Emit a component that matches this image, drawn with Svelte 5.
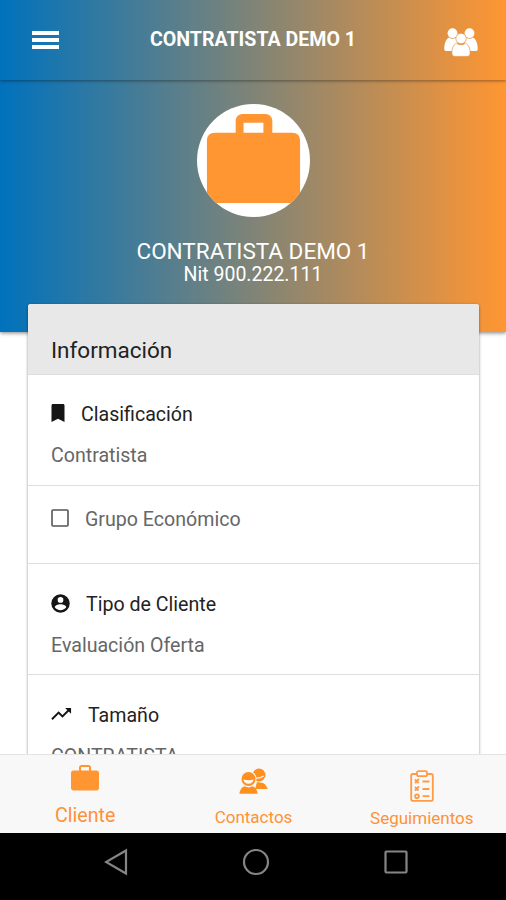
<script>
  const client = {
    name: 'CONTRATISTA DEMO 1',
    nit: '900.222.111'
  };

  const rows = [
    { icon: 'bookmark', title: 'Clasificación', value: 'Contratista' },
    { icon: 'checkbox', title: 'Grupo Económico', muted: true },
    { icon: 'person', title: 'Tipo de Cliente', value: 'Evaluación Oferta' },
    { icon: 'trending', title: 'Tamaño', value: 'CONTRATISTA' }
  ];

  const tabs = [
    { id: 'cliente', label: 'Cliente' },
    { id: 'contactos', label: 'Contactos' },
    { id: 'seguimientos', label: 'Seguimientos' }
  ];

  let selectedTab = $state('cliente');
</script>

<div class="screen">
  <header class="toolbar">
    <button class="menu" aria-label="Menú">
      <span></span>
      <span></span>
      <span></span>
    </button>
    <h1>{client.name}</h1>
    <button class="people" aria-label="Contactos">
      <svg width="34" height="29" viewBox="0 0 34 29" fill="#fff">
        <circle cx="8.5" cy="5.2" r="4.9" />
        <circle cx="25.5" cy="5.2" r="4.9" />
        <path d="M5 9.500c2 1.600 5 1.600 7 0l3 13.500H2c-1.200 0-1.700-.6-1.700-1.700C.3 16 1.500 11.500 5 9.500z" />
        <path d="M29 9.500c-2 1.600-5 1.600-7 0l-3 13.500h13c1.200 0 1.700-.6 1.700-1.700C33.700 16 32.500 11.500 29 9.500z" />
        <g stroke="#e5923f" stroke-width=".7">
          <circle cx="17" cy="10.500" r="5.200" />
          <path d="M12.500 15.200c2.800 2 6.200 2 9 0 3.300 1.200 4.800 6 4.600 10.300-.1 2-1.400 2.900-3.100 2.900H11c-1.700 0-3-.9-3.100-2.900-.2-4.300 1.300-9.100 4.600-10.300z" />
        </g>
      </svg>
    </button>
  </header>

  <section class="hero">
    <div class="avatar">
      <svg width="113" height="113" viewBox="0 0 114 114">
        <path fill="#ff9632" fill-rule="evenodd" d="M39 29v-12c0-4 3-7 7-7h23c4 0 7 3 7 7v12h20c5 0 8 3 8 8v63H10V37c0-5 3-8 8-8zm8 0h20V19H47z" />
      </svg>
    </div>
    <p class="name">{client.name}</p>
    <p class="nit">Nit {client.nit}</p>
  </section>

  <main class="content">
    <div class="card">
      <h2>Información</h2>
      {#each rows as row}
        <div class="row {row.icon}">
          <div class="row-title" class:muted={row.muted}>
            {#if row.icon === 'bookmark'}
              <svg width="14" height="18" viewBox="0 0 14 18">
                <path fill="#151515" d="M2 0h10c1 0 1.500.6 1.500 1.500V18L7 14.800.5 18V1.500C.5.6 1 0 2 0z" />
              </svg>
            {:else if row.icon === 'checkbox'}
              <svg width="18" height="18" viewBox="0 0 18 18">
                <rect x="1" y="1" width="16" height="16" rx="1" fill="none" stroke="#555" stroke-width="1.600" />
              </svg>
            {:else if row.icon === 'person'}
              <svg width="19" height="19" viewBox="0 0 20 20">
                <circle cx="10" cy="10" r="9.700" fill="#151515" />
                <circle cx="10" cy="6.200" r="3" fill="#fff" />
                <path fill="#fff" d="M10 10.800c2.500 0 6 1 6 3.200-1.300 1.900-3.500 3-6 3s-4.700-1.100-6-3c0-2.200 3.500-3.200 6-3.200z" />
              </svg>
            {:else}
              <svg width="21" height="14" viewBox="0 0 22 14">
                <path fill="none" stroke="#151515" stroke-width="2" d="M1 12.500l7-7 4 4L19 2.500" />
                <path fill="#151515" d="M14.800.6H21v6.200z" />
              </svg>
            {/if}
            <span>{row.title}</span>
          </div>
          {#if row.value}
            <div class="row-value">{row.value}</div>
          {/if}
        </div>
      {/each}
    </div>
  </main>

  <nav class="tabs">
    {#each tabs as tab}
      <button class="tab {tab.id}" class:active={selectedTab === tab.id} onclick={() => (selectedTab = tab.id)}>
        {#if tab.id === 'cliente'}
          <svg width="28" height="26" viewBox="0 0 28 26">
            <path fill="#ff9632" fill-rule="evenodd" d="M8 5.500V2.500C8 1 9 0 10.500 0h7C19 0 20 1 20 2.500v3h5.500C27 5.500 28 6.500 28 8v15c0 1.500-1 2.500-2.500 2.500h-23C1 25.500 0 24.500 0 23V8c0-1.500 1-2.500 2.500-2.500zm2 0h8v-3.500h-8z" />
          </svg>
        {:else if tab.id === 'contactos'}
          <svg width="29" height="27" viewBox="0 0 29 27">
            <circle cx="20" cy="7" r="6.500" fill="#ff9020" />
            <path fill="#ff9020" d="M16 21l2-7 6 1c2.500 1 4 3.500 4.600 6z" />
            <path fill="none" stroke="#f8f8f8" stroke-width="1.300" d="M16 10c3 .5 6-.2 8.500-2" />
            <circle cx="9.500" cy="11" r="8" fill="#f8f8f8" />
            <circle cx="9.500" cy="11" r="7" fill="#ff9020" />
            <path fill="#f8f8f8" d="M4.500 11.500c3.300 1 7 1 10 0-.2 2.600-2 4.300-5 4.300s-4.800-1.700-5-4.300z" />
            <path fill="#ff9020" d="M.3 25.800c.5-3.500 2.300-6.500 5.200-7.500 2.500 1.500 5.500 1.500 8 0 2.900 1 4.700 4 5.200 7.500z" />
          </svg>
        {:else}
          <svg width="24" height="32" viewBox="0 0 24 32" fill="none" stroke="#ff9a45" stroke-width="1.800">
            <path d="M7 4H3C1.800 4 1.200 4.600 1.200 5.600v23.600c0 1 .6 1.600 1.600 1.600h18.400c1 0 1.600-.6 1.600-1.600V5.600C22.800 4.600 22.200 4 21 4h-4" />
            <rect x="7" y="1.200" width="10" height="5" rx="1.500" />
            <path d="M12.500 11.500h7M12.500 19h7M12.500 26.200h7" />
            <path d="M5 9.500l3.500 3.500M5 13l4-4M5 17l3.500 3.500M5 20.500l4-4" />
            <circle cx="7" cy="26.200" r="1.900" />
          </svg>
        {/if}
        <span>{tab.label}</span>
      </button>
    {/each}
  </nav>

  <footer class="android-nav">
    <svg width="24" height="28" viewBox="0 0 24 28">
      <path d="M22 2.500v23L2 14z" />
    </svg>
    <svg width="28" height="28" viewBox="0 0 28 28">
      <circle cx="14" cy="14" r="12" />
    </svg>
    <svg width="24" height="24" viewBox="0 0 24 24">
      <rect x="1.500" y="1.500" width="21" height="21" rx="1" />
    </svg>
  </footer>
</div>

<style>
  :global(body) {
    background: #fff;
  }

  * {
    box-sizing: border-box;
    margin: 0;
  }

  .screen {
    display: flex;
    flex-direction: column;
    height: 900px;
    overflow: hidden;
    font-family: Roboto, sans-serif;
  }

  button {
    padding: 0;
    border: none;
    background: none;
    font-family: inherit;
  }

  .toolbar {
    display: grid;
    grid-template-columns: 90px 1fr 90px;
    flex: none;
    height: 80px;
    align-items: center;
    justify-items: center;
    background: linear-gradient(to right, #0072bc, #ff9632);
    box-shadow: 0 1px 3px rgba(0, 0, 0, 0.4);
    z-index: 1;
  }

  .menu {
    display: flex;
    flex-direction: column;
    gap: 3px;
  }

  .menu span {
    width: 27px;
    height: 4px;
    background: #fff;
  }

  .people svg {
    display: block;
    margin-top: 5px;
  }

  .toolbar h1 {
    color: #fff;
    font-size: 19.6px;
    font-weight: 700;
    line-height: 24px;
    margin-top: -1px;
    white-space: nowrap;
  }

  .hero {
    display: flex;
    flex-direction: column;
    flex: none;
    align-items: center;
    height: 252px;
    padding-top: 24px;
    background: linear-gradient(to right, #0072bc, #ff9632);
    box-shadow: 0 1px 4px rgba(0, 0, 0, 0.5);
    color: #fff;
  }

  .avatar {
    width: 113px;
    height: 113px;
    overflow: hidden;
    border-radius: 50%;
    background: #fff;
  }

  .name {
    margin-top: 20px;
    font-size: 22.5px;
    line-height: 28px;
  }

  .nit {
    font-size: 19.5px;
    line-height: 20px;
  }

  .content {
    flex: 1;
    min-height: 0;
    margin-top: -28px;
    padding: 0 27px 0 28px;
  }

  .card {
    border-radius: 3px;
    background: #fff;
    box-shadow: 0 1px 3px rgba(0, 0, 0, 0.45);
  }

  .card h2 {
    height: 71px;
    padding: 32px 23px 0;
    border-bottom: 1px solid #dedede;
    border-radius: 3px 3px 0 0;
    background: #e8e8e8;
    color: #222;
    font-size: 22.5px;
    font-weight: 400;
    line-height: 28px;
  }

  .row {
    height: 111px;
    padding: 27px 23px 0;
    border-bottom: 1px solid #dedede;
    font-size: 19.6px;
    line-height: 26px;
  }

  .row.checkbox {
    height: 78px;
    padding-top: 21px;
  }

  .row.person {
    padding-top: 28px;
  }

  .row.trending {
    padding-top: 28px;
  }

  .row-title {
    display: flex;
    align-items: center;
    gap: 16px;
    color: #222;
  }

  .row-title svg {
    flex: none;
    margin-top: -4px;
  }

  .row-title.muted {
    color: #666;
  }

  .row-value {
    margin-top: 15px;
    color: #666;
  }

  .tabs {
    display: grid;
    grid-template-columns: repeat(3, 1fr);
    flex: none;
    height: 79px;
    padding-left: 1px;
    border-top: 1px solid #e4e4e4;
    background: #f8f8f8;
    z-index: 1;
  }

  .tab {
    display: flex;
    flex-direction: column;
    align-items: center;
    padding-top: 10px;
    color: #ff9138;
    font-size: 17px;
    line-height: 22px;
  }

  .tab span {
    margin-top: 14px;
  }

  .tab.active {
    font-size: 19.6px;
  }

  .tab.contactos {
    padding-top: 13px;
  }

  .tab.contactos span {
    margin-top: 11px;
  }

  .tab.seguimientos {
    padding-top: 15px;
  }

  .tab.seguimientos span {
    margin-top: 5px;
  }

  .android-nav {
    display: grid;
    grid-template-columns: repeat(3, 140px);
    flex: none;
    height: 67px;
    padding: 0 0 10px 5px;
    align-items: center;
    justify-content: center;
    justify-items: center;
    background: #000;
  }

  .android-nav svg {
    fill: none;
    stroke: #858585;
    stroke-width: 2.2;
  }
</style>
